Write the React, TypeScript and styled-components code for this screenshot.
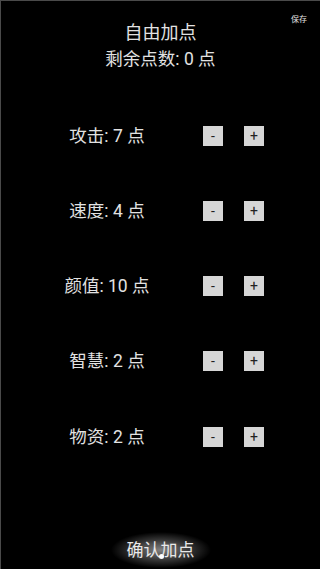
import styled, { createGlobalStyle } from 'styled-components';

const GlobalStyle = createGlobalStyle`
  html, body {
    margin: 0;
    padding: 0;
    background: #000;
  }

  body {
    font-family: Roboto, 'Noto Sans CJK SC', sans-serif;
  }
`;

const stats = [
  { name: '攻击', value: 7 },
  { name: '速度', value: 4 },
  { name: '颜值', value: 10 },
  { name: '智慧', value: 2 },
  { name: '物资', value: 2 },
];

const App: React.FC = () => {
  return (
    <>
      <GlobalStyle />
      <Screen>
        <Header>
          <Title>自由加点</Title>
          <SaveBtn>保存</SaveBtn>
        </Header>
        <Remaining>剩余点数: 0 点</Remaining>
        <StatList>
          {stats.map((stat) => (
            <StatRow key={stat.name}>
              <StatLabel>
                {stat.name}: {stat.value} 点
              </StatLabel>
              <StepBtn>-</StepBtn>
              <StepBtn>+</StepBtn>
            </StatRow>
          ))}
        </StatList>
        <Footer>
          <ConfirmBtn>确认加点</ConfirmBtn>
        </Footer>
      </Screen>
    </>
  );
};

const Screen = styled.div`
  box-sizing: border-box;
  width: 320px;
  height: 569px;
  display: flex;
  flex-direction: column;
  background: #000;
  color: #e2e2e2;
  border-top: 1px solid #4a4a4a;
  border-left: 1px solid #4a4a4a;
  overflow: hidden;
`;

const Header = styled.div`
  display: grid;
  grid-template-columns: 1fr auto 1fr;
  padding-top: 20px;
`;

const Title = styled.h1`
  grid-column: 2;
  margin: 0;
  font-size: 18px;
  font-weight: 400;
  line-height: 24px;
`;

const SaveBtn = styled.button`
  grid-column: 3;
  justify-self: end;
  align-self: start;
  margin: -6px 13px 0 0;
  padding: 0;
  border: none;
  background: none;
  color: #e2e2e2;
  font-family: inherit;
  font-size: 8px;
  line-height: 10px;
`;

const Remaining = styled.div`
  margin-top: 3px;
  text-align: center;
  font-size: 17.5px;
  line-height: 22px;
`;

const StatList = styled.div`
  display: flex;
  flex-direction: column;
  margin-top: 28px;
`;

const StatRow = styled.div`
  display: flex;
  align-items: center;
  height: 75.25px;
  padding-left: 39px;
`;

const StatLabel = styled.span`
  width: 134px;
  text-align: center;
  font-size: 17.5px;
  line-height: 22px;
`;

const StepBtn = styled.button`
  box-sizing: border-box;
  width: 20px;
  height: 20px;
  margin-left: 21px;
  padding: 0;
  border: none;
  background: #d6d6d6;
  color: #222;
  font-family: Roboto, sans-serif;
  font-size: 14px;
  line-height: 20px;

  &:first-of-type {
    margin-left: 29px;
  }
`;

const Footer = styled.div`
  display: flex;
  justify-content: center;
  margin-top: auto;
  padding-bottom: 1px;
`;

const ConfirmBtn = styled.button`
  position: relative;
  width: 100px;
  height: 36px;
  padding: 0;
  border: none;
  background: radial-gradient(
    closest-side,
    rgba(255, 255, 255, 0.5),
    rgba(255, 255, 255, 0.22) 55%,
    rgba(255, 255, 255, 0) 100%
  );
  color: #e8e8e8;
  font-family: inherit;
  font-size: 17px;
  line-height: 24px;

  &::after {
    content: '';
    position: absolute;
    left: 48px;
    bottom: 9px;
    width: 5px;
    height: 5px;
    border-radius: 50%;
    background: #fff;
  }
`;

export default App;
